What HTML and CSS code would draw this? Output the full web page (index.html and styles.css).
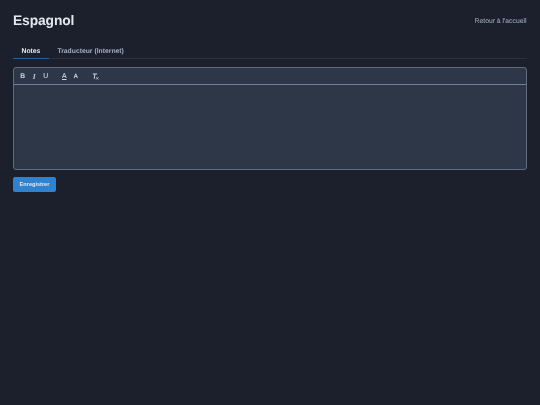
FILE: index.html
```html
<!DOCTYPE html>
<html lang="fr">
<head>
<meta charset="utf-8">
<title>Espagnol</title>
<link rel="stylesheet" href="styles.css">
</head>
<body>
<main class="page">
  <header class="head">
    <h1 class="title">Espagnol</h1>
    <a class="back" href="#">Retour à l'accueil</a>
  </header>
  <nav class="tabs">
    <a class="tab active" href="#">Notes</a>
    <a class="tab" href="#">Traducteur (Internet)</a>
  </nav>
  <section class="editor">
    <div class="toolbar">
      <div class="group">
        <span class="tool bold">B</span>
        <span class="tool italic">I</span>
        <span class="tool under">U</span>
      </div>
      <div class="group">
        <span class="tool under-line">A</span>
        <span class="tool small-a">A</span>
      </div>
      <div class="group">
        <svg class="clear" viewBox="0 0 9 9" width="7" height="7" aria-hidden="true">
          <path d="M1 1.2H6.6M3.8 1.2L2.8 7.4" fill="none" stroke="#cbd5e0" stroke-width="1.3"/>
          <path d="M5.2 5.4L8.2 8.4M8.2 5.4L5.2 8.4" fill="none" stroke="#cbd5e0" stroke-width="1"/>
        </svg>
      </div>
    </div>
    <div class="area"></div>
  </section>
  <button class="save" type="button">Enregistrer</button>
</main>
</body>
</html>
```
FILE: styles.css
```css
* { box-sizing: border-box; }
html, body { margin: 0; height: 100%; }
body {
  background: #1c202c;
  color: #e2e8f0;
  font-family: "Liberation Sans", Arial, sans-serif;
  text-rendering: geometricPrecision;
}
.page {
  padding: 13px 13.5px 0 13px;
  will-change: transform;
}
.head {
  display: flex;
  justify-content: space-between;
  align-items: center;
  height: 16px;
}
.title {
  margin: 0;
  font-size: 13.8px;
  font-weight: 700;
  line-height: 16px;
  letter-spacing: -.1px;
}
.back {
  color: #8f9cb0;
  font-size: 6.8px;
  text-decoration: none;
  -webkit-text-stroke: .12px #8f9cb0;
}
.tabs {
  display: flex;
  margin-top: 13px;
  height: 17px;
  border-bottom: 1px solid #283140;
}
.tab {
  padding: 5.5px 8.5px 0;
  height: 17px;
  font-size: 6.8px;
  font-weight: 700;
  color: #a0aec0;
  text-decoration: none;
}
.tab.active {
  color: #e2e8f0;
  border-bottom: 1px solid #2c5f94;
}
.editor {
  margin-top: 8px;
  height: 102.5px;
  display: flex;
  flex-direction: column;
  background: #2d3748;
  border: 1px solid #5f6b7e;
  border-radius: 3px;
}
.toolbar {
  display: flex;
  align-items: center;
  gap: 7px;
  height: 17px;
  padding: 1.5px 0 0 3px;
  border-bottom: 1px solid #718096;
  flex: none;
}
.group { display: flex; align-items: center; }
.tool {
  width: 11.5px;
  text-align: center;
  font-size: 6.8px;
  line-height: 8px;
  color: #cbd5e0;
}
.bold { font-weight: 700; }
.italic { font-style: italic; font-family: "Liberation Serif", serif; font-weight: 700; font-size: 7.2px; }
.under { font-weight: 400; -webkit-text-stroke: .12px #cbd5e0; }
.under-line {
  text-decoration: underline;
  text-underline-offset: 1px;
  -webkit-text-stroke: .12px #cbd5e0;
}
.small-a { font-size: 6.2px; font-weight: 700; }
.clear { display: block; margin: -1px 0 0 3.5px; }
.area { flex: 1; }
.save {
  display: block;
  margin-top: 7.5px;
  width: 43px;
  height: 14.5px;
  padding: 0;
  border: 0;
  border-radius: 2px;
  background: #3182ce;
  color: #e2e8f0;
  font: 700 5.6px "Liberation Sans", Arial, sans-serif;
}
```
